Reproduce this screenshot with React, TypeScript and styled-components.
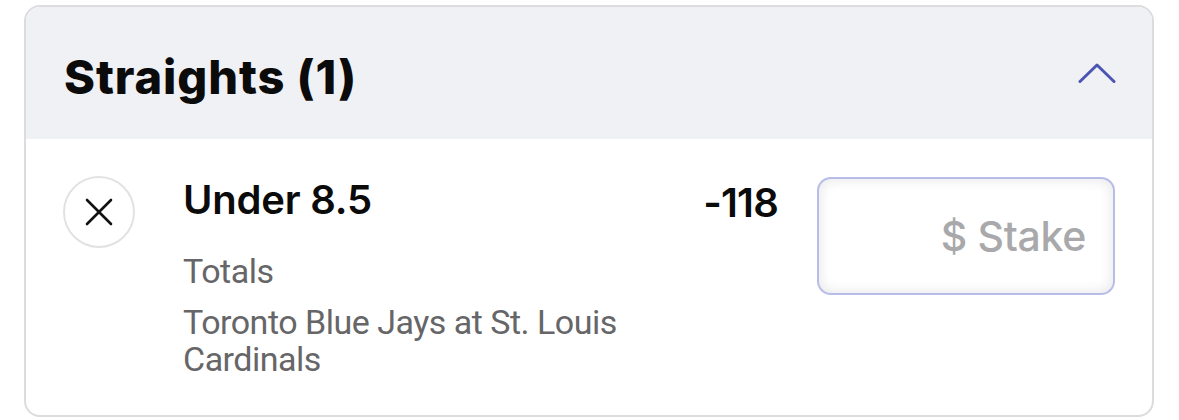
import React from "react";
import styled, { createGlobalStyle } from "styled-components";

const Global = createGlobalStyle`
  html, body { margin: 0; padding: 0; background: #ffffff; }
  body { font-family: Inter, "Liberation Sans", sans-serif; -webkit-font-smoothing: antialiased; }
`;

const Page = styled.div`
  padding: 5px 0 0 24px;
  width: 1179px;
  height: 420px;
  box-sizing: border-box;
`;

const Card = styled.section`
  width: 1130px;
  height: 412px;
  box-sizing: border-box;
  border: 2px solid #dcdcdf;
  border-radius: 16px;
  overflow: hidden;
  background: #ffffff;
  display: flex;
  flex-direction: column;
`;

const Header = styled.header`
  height: 132px;
  flex: none;
  background: #f0f1f4;
  display: flex;
  align-items: center;
  justify-content: space-between;
  padding: 0 36px 0 38px;
  box-sizing: border-box;
`;

const Title = styled.h2`
  margin: 7px 0 0 0;
  font-family: Inter, "Liberation Sans", sans-serif;
  font-weight: 800;
  font-size: 47px;
  letter-spacing: 0.9px;
  color: #0b0b0b;
`;

const Toggle = styled.button`
  border: 0;
  background: transparent;
  padding: 0;
  width: 38px;
  height: 22px;
  display: flex;
  align-items: center;
  justify-content: center;
`;

const Row = styled.div`
  display: flex;
  align-items: flex-start;
  padding: 37px 37px 0 37px;
`;

const CloseButton = styled.button`
  flex: none;
  width: 72px;
  height: 72px;
  border-radius: 50%;
  border: 2px solid #e2e2e4;
  background: #ffffff;
  padding: 0;
  display: flex;
  align-items: center;
  justify-content: center;
`;

const Info = styled.div`
  flex: 1;
  margin-left: 48px;
  display: flex;
  flex-direction: column;
`;

const Selection = styled.div`
  font-family: Inter, "Liberation Sans", sans-serif;
  font-weight: 600;
  font-size: 40px;
  line-height: 48px;
  color: #0b0b0b;
  letter-spacing: -0.2px;
`;

const Meta = styled.div`
  font-family: Roboto, "Liberation Sans", sans-serif;
  font-weight: 400;
  font-size: 34px;
  line-height: 37px;
  letter-spacing: -0.5px;
  color: #666668;
  max-width: 470px;
`;

const Market = styled(Meta)`
  margin-top: 29px;
`;

const Event = styled(Meta)`
  margin-top: 14px;
`;

const Odds = styled.div`
  font-family: Inter, "Liberation Sans", sans-serif;
  font-weight: 600;
  font-size: 40px;
  line-height: 48px;
  margin-top: 3px;
  margin-right: 39px;
  color: #0b0b0b;
  letter-spacing: -0.8px;
`;

const StakeBox = styled.div`
  flex: none;
  width: 298px;
  height: 118px;
  box-sizing: border-box;
  border: 2px solid #b7bde8;
  border-radius: 14px;
  background: #ffffff;
  box-shadow: inset 0 0 14px rgba(0, 0, 0, 0.11);
  display: flex;
  align-items: center;
  justify-content: flex-end;
  padding: 0 27px 0 20px;
  margin-top: 1px;
`;

const StakeText = styled.span`
  font-family: Inter, "Liberation Sans", sans-serif;
  font-weight: 500;
  font-size: 41px;
  color: #a9a9ab;
  letter-spacing: -0.3px;
`;

export default function App() {
  return (
    <>
      <Global />
      <Page>
        <Card>
          <Header>
            <Title>Straights (1)</Title>
            <Toggle aria-label="Collapse">
              <svg width="38" height="22" viewBox="0 0 38 22" fill="none">
                <path d="M2 19.5 L19 3 L36 19.5" stroke="#4b55b3" strokeWidth="3" strokeLinecap="round" strokeLinejoin="round" />
              </svg>
            </Toggle>
          </Header>
          <Row>
            <CloseButton aria-label="Remove">
              <svg width="28" height="28" viewBox="0 0 28 28" fill="none">
                <path d="M2 2 L26 26 M26 2 L2 26" stroke="#111" strokeWidth="2.6" strokeLinecap="round" />
              </svg>
            </CloseButton>
            <Info>
              <Selection>Under 8.5</Selection>
              <Market>Totals</Market>
              <Event>Toronto Blue Jays at St. Louis Cardinals</Event>
            </Info>
            <Odds>-118</Odds>
            <StakeBox>
              <StakeText>$ Stake</StakeText>
            </StakeBox>
          </Row>
        </Card>
      </Page>
    </>
  );
}
